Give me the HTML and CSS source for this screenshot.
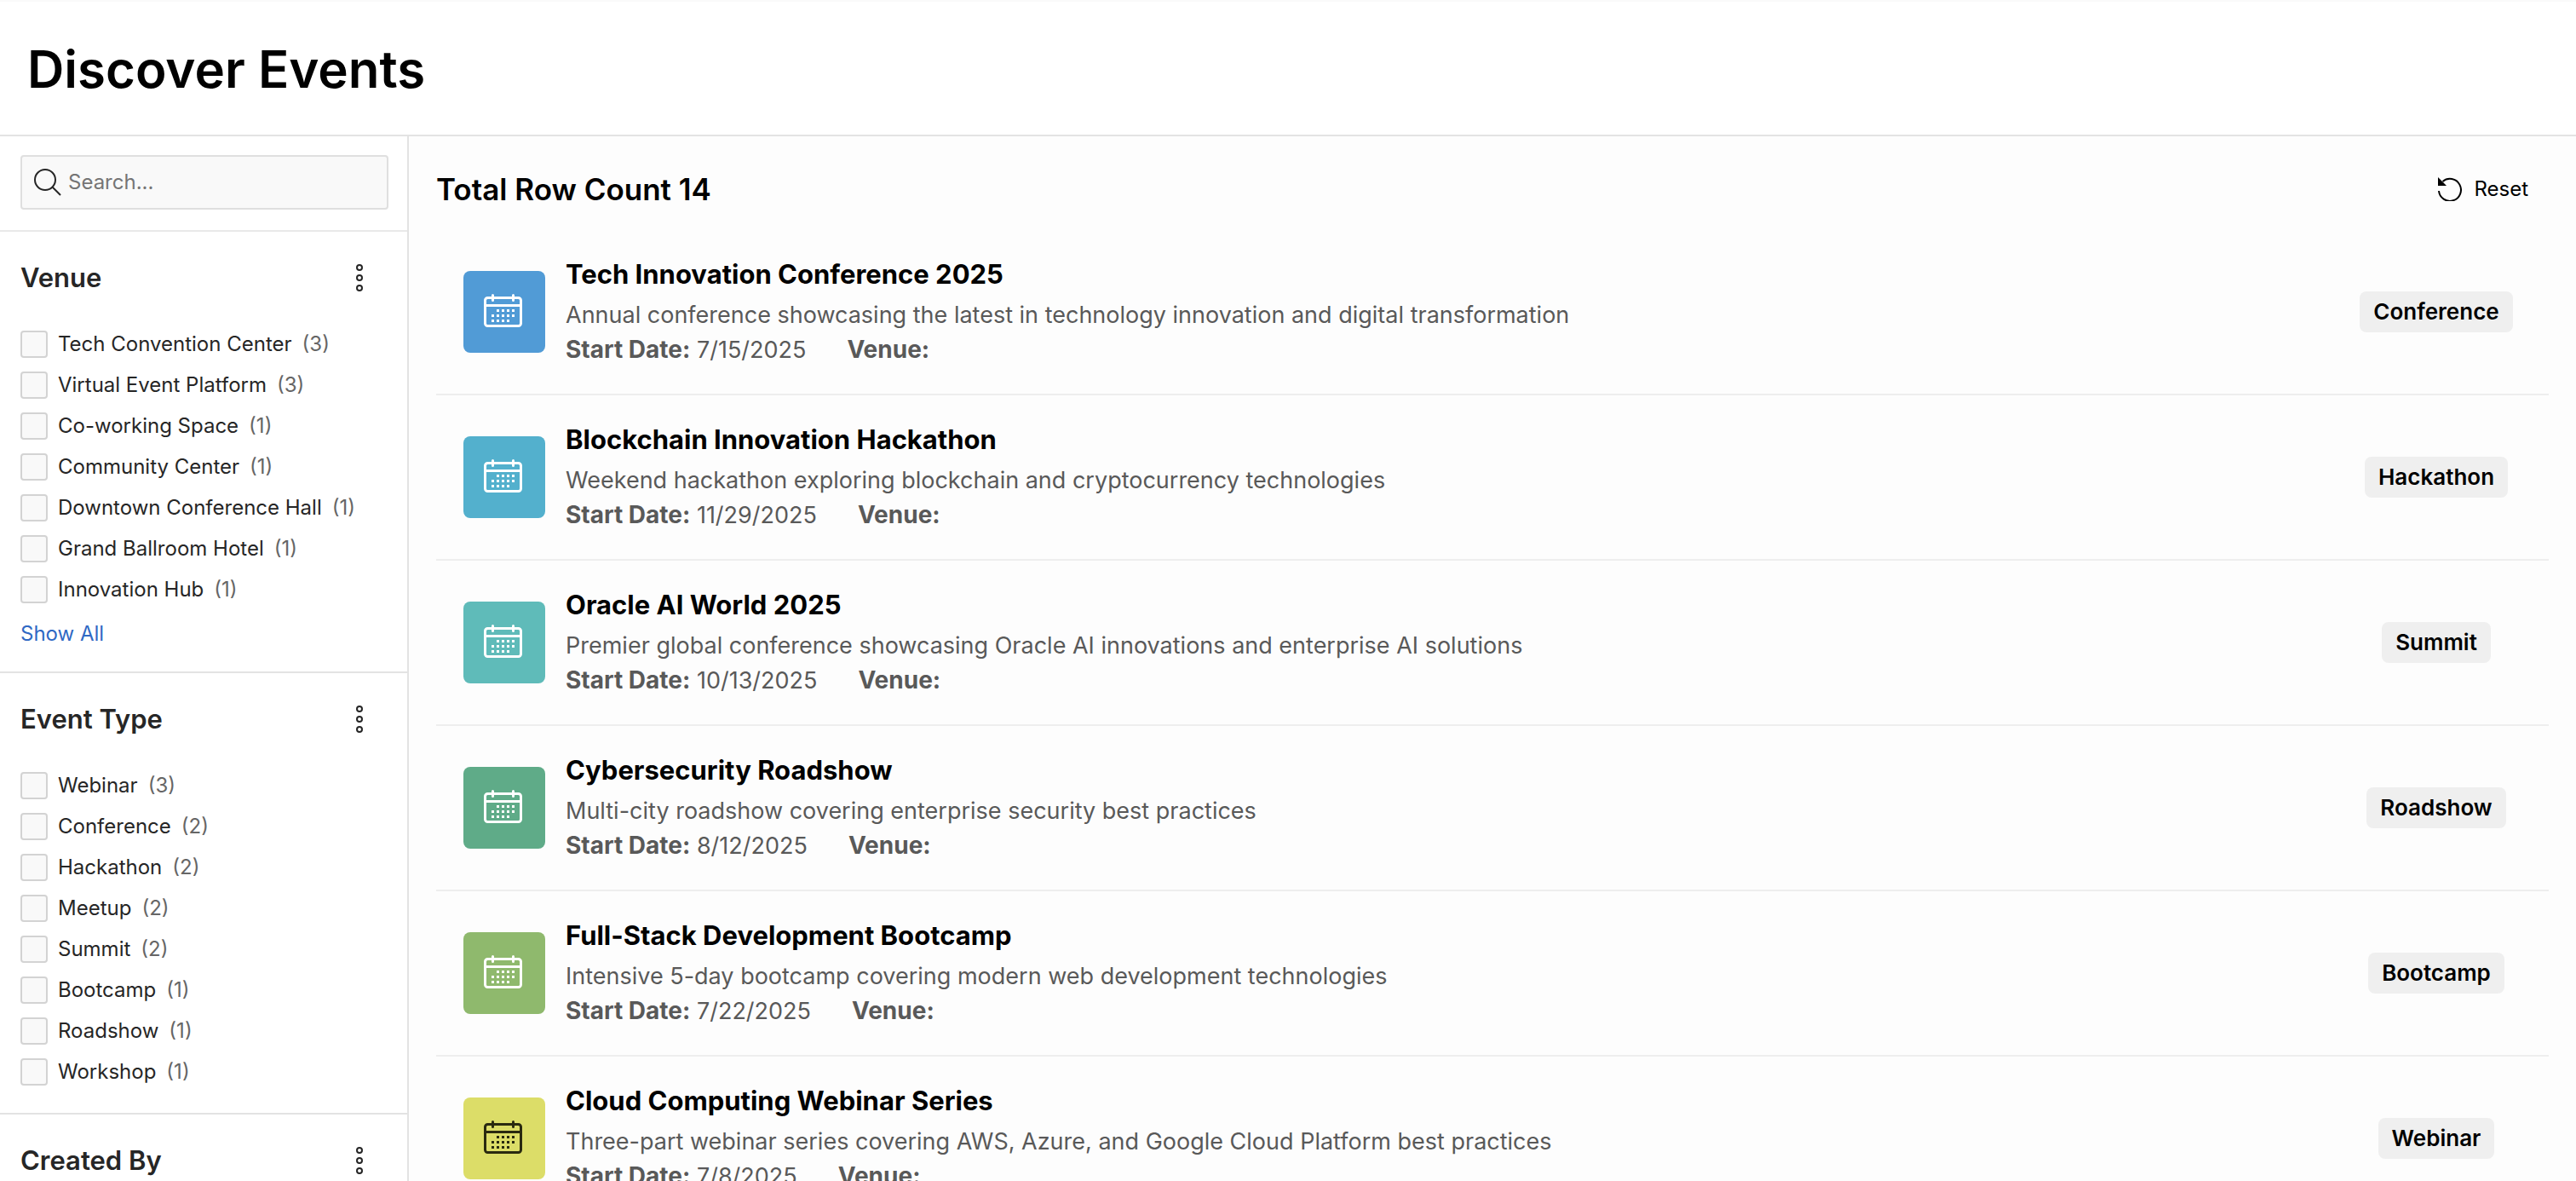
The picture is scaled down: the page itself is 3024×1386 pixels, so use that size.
FILE: index.html
```html
<!DOCTYPE html>
<html lang="en">
<head>
<meta charset="utf-8">
<title>Discover Events</title>
<link rel="stylesheet" href="styles.css">
</head>
<body>
<svg class="sprite" aria-hidden="true">
  <symbol id="calendar" viewBox="0 0 16 16">
    <rect x=".5" y="2.5" width="14" height="11" rx="1" fill="none" stroke="currentColor"/>
    <path d="M1 5.5h13" fill="none" stroke="currentColor"/>
    <path d="M3.5 1.5v2M11.500 1.500v2" fill="none" stroke="currentColor" stroke-linecap="round"/>
    <path d="M5 7h1v1H5zM7 7h1v1H7zM9 7h1v1H9zM11 7h1v1h-1zM3 9h1v1H3zM5 9h1v1H5zM7 9h1v1H7zM9 9h1v1H9zM11 9h1v1h-1zM3 11h1v1H3zM5 11h1v1H5zM7 11h1v1H7zM9 11h1v1H9z" fill="currentColor"/>
  </symbol>
  <symbol id="dots" viewBox="0 0 8 32">
    <g fill="none" stroke="currentColor" stroke-width="2"><circle cx="4" cy="4" r="3"/><circle cx="4" cy="16" r="3"/><circle cx="4" cy="28" r="3"/></g>
  </symbol>
</svg>
<div class="app">
  <header class="page-header"><h1>Discover Events</h1></header>
  <div class="layout">
    <aside class="sidebar">
      <form class="search" role="search">
        <label class="search-box">
          <svg class="search-icon" viewBox="0 0 32 32" aria-hidden="true"><g fill="none" stroke="currentColor" stroke-width="2"><circle cx="13" cy="13" r="12"/><path d="M21.500 21.500 31 31"/></g></svg>
          <input type="search" placeholder="Search..." aria-label="Search">
        </label>
      </form>
      <section class="facet">
        <div class="facet-head"><h2>Venue</h2><button type="button" class="menu" aria-label="Venue options"><svg><use href="#dots"/></svg></button></div>
        <ul class="options">
          <li><label><input type="checkbox">Tech Convention Center <span>(3)</span></label></li>
          <li><label><input type="checkbox">Virtual Event Platform <span>(3)</span></label></li>
          <li><label><input type="checkbox">Co-working Space <span>(1)</span></label></li>
          <li><label><input type="checkbox">Community Center <span>(1)</span></label></li>
          <li><label><input type="checkbox">Downtown Conference Hall <span>(1)</span></label></li>
          <li><label><input type="checkbox">Grand Ballroom Hotel <span>(1)</span></label></li>
          <li><label><input type="checkbox">Innovation Hub <span>(1)</span></label></li>
        </ul>
        <a class="show-all" href="#">Show All</a>
      </section>
      <section class="facet">
        <div class="facet-head"><h2>Event Type</h2><button type="button" class="menu" aria-label="Event Type options"><svg><use href="#dots"/></svg></button></div>
        <ul class="options">
          <li><label><input type="checkbox">Webinar <span>(3)</span></label></li>
          <li><label><input type="checkbox">Conference <span>(2)</span></label></li>
          <li><label><input type="checkbox">Hackathon <span>(2)</span></label></li>
          <li><label><input type="checkbox">Meetup <span>(2)</span></label></li>
          <li><label><input type="checkbox">Summit <span>(2)</span></label></li>
          <li><label><input type="checkbox">Bootcamp <span>(1)</span></label></li>
          <li><label><input type="checkbox">Roadshow <span>(1)</span></label></li>
          <li><label><input type="checkbox">Workshop <span>(1)</span></label></li>
        </ul>
      </section>
      <section class="facet">
        <div class="facet-head"><h2>Created By</h2><button type="button" class="menu" aria-label="Created By options"><svg><use href="#dots"/></svg></button></div>
      </section>
    </aside>
    <main class="main">
      <div class="toolbar">
        <h2>Total Row Count 14</h2>
        <button type="button" class="reset"><svg viewBox="0 0 28 28" aria-hidden="true"><path d="M1 16A13 13 0 1 0 5.500 5" fill="none" stroke="currentColor" stroke-width="2"/><path d="M0 0v10h10z" fill="currentColor"/></svg>Reset</button>
      </div>
      <ul class="events">
        <li class="event">
          <div class="tile blue"><svg><use href="#calendar"/></svg></div>
          <div class="info"><h3>Tech Innovation Conference 2025</h3><p>Annual conference showcasing the latest in technology innovation and digital transformation</p><p class="meta"><span><b>Start Date:</b> 7/15/2025</span><b>Venue:</b></p></div>
          <div class="kind"><span class="badge">Conference</span></div>
        </li>
        <li class="event">
          <div class="tile cyan"><svg><use href="#calendar"/></svg></div>
          <div class="info"><h3>Blockchain Innovation Hackathon</h3><p>Weekend hackathon exploring blockchain and cryptocurrency technologies</p><p class="meta"><span><b>Start Date:</b> 11/29/2025</span><b>Venue:</b></p></div>
          <div class="kind"><span class="badge">Hackathon</span></div>
        </li>
        <li class="event">
          <div class="tile teal"><svg><use href="#calendar"/></svg></div>
          <div class="info"><h3>Oracle AI World 2025</h3><p>Premier global conference showcasing Oracle AI innovations and enterprise AI solutions</p><p class="meta"><span><b>Start Date:</b> 10/13/2025</span><b>Venue:</b></p></div>
          <div class="kind"><span class="badge">Summit</span></div>
        </li>
        <li class="event">
          <div class="tile green"><svg><use href="#calendar"/></svg></div>
          <div class="info"><h3>Cybersecurity Roadshow</h3><p>Multi-city roadshow covering enterprise security best practices</p><p class="meta"><span><b>Start Date:</b> 8/12/2025</span><b>Venue:</b></p></div>
          <div class="kind"><span class="badge">Roadshow</span></div>
        </li>
        <li class="event">
          <div class="tile lime"><svg><use href="#calendar"/></svg></div>
          <div class="info"><h3>Full-Stack Development Bootcamp</h3><p>Intensive 5-day bootcamp covering modern web development technologies</p><p class="meta"><span><b>Start Date:</b> 7/22/2025</span><b>Venue:</b></p></div>
          <div class="kind"><span class="badge">Bootcamp</span></div>
        </li>
        <li class="event">
          <div class="tile yellow"><svg><use href="#calendar"/></svg></div>
          <div class="info"><h3>Cloud Computing Webinar Series</h3><p>Three-part webinar series covering AWS, Azure, and Google Cloud Platform best practices</p><p class="meta"><span><b>Start Date:</b> 7/8/2025</span><b>Venue:</b></p></div>
          <div class="kind"><span class="badge">Webinar</span></div>
        </li>
      </ul>
    </main>
  </div>
</div>
</body>
</html>
```
FILE: styles.css
```css
* { box-sizing: border-box; margin: 0; padding: 0; }
body { font-family: Inter, "Liberation Sans", sans-serif; color: #000; background: #fff; }
ul { list-style: none; }
button { border: 0; background: none; font: inherit; color: inherit; cursor: pointer; }
.sprite { display: none; }

.app { display: flex; flex-direction: column; height: 100vh; overflow: hidden; }
.page-header { padding: 40px 32px 38px; border-top: 2px solid #fafafa; border-bottom: 2px solid #e3e3e3; }
h1 { font-size: 60px; line-height: 78px; font-weight: 600; }
.layout { display: flex; flex: 1; min-height: 0; }

.sidebar { flex: 0 0 480px; border-right: 2px solid #e3e3e3; overflow: hidden; color: #262626; }
.search { padding: 22px 22px 24px 24px; border-bottom: 2px solid #e9e9e9; }
.search-box { display: flex; align-items: center; gap: 8px; height: 64px; padding: 0 14px; border: 2px solid #dfdfdf; border-radius: 4px; background: #f9f9f9; }
.search-icon { width: 32px; height: 32px; flex: none; }
.search-box input { flex: 1; min-width: 0; border: 0; outline: 0; background: none; font: inherit; font-size: 24px; line-height: 32px; }
.search-box input::placeholder { color: #757575; }

.facet { padding: 32px 24px; border-bottom: 2px solid #e3e3e3; }
.facet-head { display: flex; justify-content: space-between; align-items: center; height: 44px; padding-right: 28px; margin-bottom: 40px; }
.facet h2 { font-size: 31px; line-height: 44px; font-weight: 600; }
.menu { display: flex; }
.menu svg { width: 8px; height: 32px; }
.options { display: grid; gap: 16px; }
.options label { display: flex; align-items: center; gap: 12px; font-size: 24px; line-height: 32px; }
.options input { appearance: none; width: 32px; height: 32px; border: 2px solid #d3d3d3; border-radius: 4px; background: #f9f9f9; }
.options span { color: #666; }
.show-all { display: block; margin-top: 24px; font-size: 24px; line-height: 24px; color: #3069c4; text-decoration: none; }

.main { flex: 1; min-width: 0; padding: 22px 32px 0; background: #fdfdfd; overflow: hidden; }
.toolbar { display: flex; justify-content: space-between; align-items: center; height: 80px; margin-bottom: 8px; padding-right: 24px; }
.toolbar h2 { font-size: 35px; line-height: 44px; font-weight: 600; }
.reset { display: flex; align-items: center; gap: 14px; font-size: 24px; line-height: 32px; }
.reset svg { width: 28px; height: 28px; }
.event { display: flex; align-items: center; gap: 24px; height: 194px; padding-left: 32px; border-bottom: 2px solid #eee; }
.tile { display: grid; place-items: center; flex: none; width: 96px; height: 96px; border-radius: 8px; color: #fff; }
.tile svg { width: 48px; height: 48px; }
.blue { background: #519bd6; }
.cyan { background: #53b0cd; }
.teal { background: #5fbbb9; }
.green { background: #5fab88; }
.lime { background: #8fb96d; }
.yellow { background: #dcdd68; color: #2a2a10; }
.info { flex: 1; min-width: 0; }
.info h3 { margin-bottom: 8px; font-size: 31px; line-height: 40px; font-weight: 700; }
.info p { font-size: 27px; line-height: 40px; color: #595959; }
.info .meta { display: flex; gap: 48px; }
.info b { font-size: 28px; font-weight: 700; }
.kind { flex: 0 0 264px; display: flex; justify-content: center; }
.badge { padding: 8px 16px; border-radius: 8px; background: #efefef; font-size: 26px; line-height: 32px; font-weight: 600; }
```
